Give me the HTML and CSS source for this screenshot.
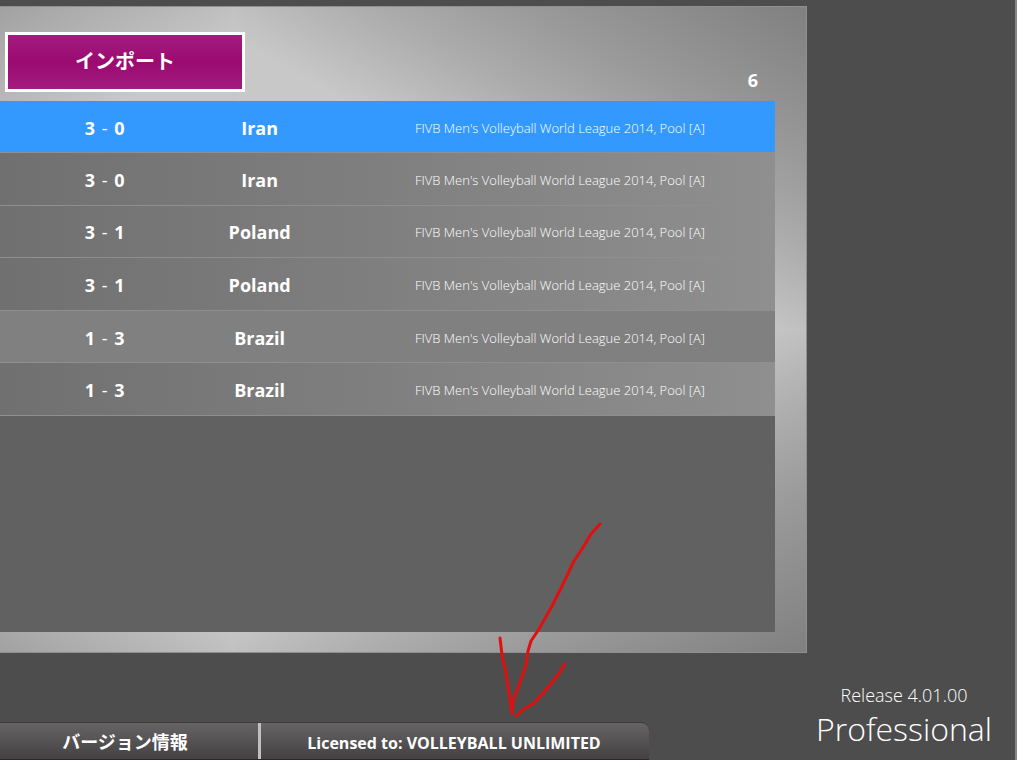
FILE: index.html
```html
<!DOCTYPE html>
<html lang="ja">
<head>
    <meta charset="UTF-8">
    <meta name="viewport" content="width=device-width, initial-scale=1.0">
    <title>インポート</title>
    <link rel="stylesheet" href="styles.css">
</head>
<body>
    <main class="panel">
        <header class="panel-header">
            <button type="button" class="import-button">インポート</button>
            <span class="match-count">6</span>
        </header>
        <div class="match-list">
            <table class="matches">
                <tbody>
                    <tr class="selected">
                        <td class="score">3 <span class="dash">-</span> 0</td>
                        <td class="team">Iran</td>
                        <td class="league">FIVB Men's Volleyball World League 2014, Pool [A]</td>
                    </tr>
                    <tr>
                        <td class="score">3 <span class="dash">-</span> 0</td>
                        <td class="team">Iran</td>
                        <td class="league">FIVB Men's Volleyball World League 2014, Pool [A]</td>
                    </tr>
                    <tr>
                        <td class="score">3 <span class="dash">-</span> 1</td>
                        <td class="team">Poland</td>
                        <td class="league">FIVB Men's Volleyball World League 2014, Pool [A]</td>
                    </tr>
                    <tr>
                        <td class="score">3 <span class="dash">-</span> 1</td>
                        <td class="team">Poland</td>
                        <td class="league">FIVB Men's Volleyball World League 2014, Pool [A]</td>
                    </tr>
                    <tr class="hovered">
                        <td class="score">1 <span class="dash">-</span> 3</td>
                        <td class="team">Brazil</td>
                        <td class="league">FIVB Men's Volleyball World League 2014, Pool [A]</td>
                    </tr>
                    <tr>
                        <td class="score">1 <span class="dash">-</span> 3</td>
                        <td class="team">Brazil</td>
                        <td class="league">FIVB Men's Volleyball World League 2014, Pool [A]</td>
                    </tr>
                </tbody>
            </table>
        </div>
    </main>

    <footer class="bottom">
        <div class="tab-bar">
            <button type="button" class="version-button">バージョン情報</button>
            <p class="license">Licensed to: VOLLEYBALL UNLIMITED</p>
        </div>
        <div class="release">
            <p class="release-number">Release 4.01.00</p>
            <p class="edition">Professional</p>
        </div>
    </footer>

    <!-- Hand-drawn arrow pointing at the licence name -->
    <svg class="arrow" width="120" height="210" viewBox="490 515 120 210" aria-hidden="true">
        <path d="M600 524 L591 534 L582 549 L574 561 L564 582 L552 606 L539 629 L531 641 L528 651 L526 665 L519 685 L513 701 L512 713"/>
        <path d="M500 638 L502 655 L506 673 L509 693 L512 713"/>
        <path d="M565 664 L558 675 L545 691 L533 704 L525 708 L516 716"/>
    </svg>
</body>
</html>
```

FILE: styles.css
```css
* {
    margin: 0;
    padding: 0;
    box-sizing: border-box;
}

body {
    position: relative;
    display: flex;
    flex-direction: column;
    min-height: 100vh;
    padding-top: 6px;
    background-color: #4d4d4d;
    border-right: 2px solid #858585;
    font-family: 'Open Sans', 'Noto Sans CJK JP', sans-serif;
    color: #fff;
}

button {
    border: none;
    color: #fff;
    font-family: 'Noto Sans CJK JP', sans-serif;
    font-weight: bold;
    cursor: pointer;
}

/* Main panel: four gradients meet in a light diamond, corners are dark */
.panel {
    flex: 1;
    display: flex;
    flex-direction: column;
    margin-right: 208px;
    padding: 0 31px 20px 0;
    border: 1px solid #909090;
    border-left: none;
    background-color: #c4c4c4;
    background-image:
        linear-gradient(to top right, #c8c8c8 45%, #c0c0c0 50%, #acacac 62%, #999999 76%, #808080 100%),
        linear-gradient(to bottom right, #c8c8c8 45%, #c0c0c0 50%, #acacac 62%, #999999 76%, #808080 100%),
        linear-gradient(to top left, #c8c8c8 45%, #c0c0c0 50%, #aaaaaa 65%, #989898 76%, #808080 100%),
        linear-gradient(to bottom left, #c8c8c8 45%, #c0c0c0 50%, #aaaaaa 65%, #989898 76%, #808080 100%);
    background-size: 71% 50%;
    background-position: 100% 0, 100% 100%, -145% 0, -145% 100%;
    background-repeat: no-repeat;
}

.panel-header {
    display: flex;
    justify-content: space-between;
    align-items: flex-end;
    padding: 25px 17px 9px 5px;
}

.import-button {
    width: 240px;
    height: 60px;
    padding-bottom: 4px;
    border: 3px solid #fff;
    background: linear-gradient(#a41c80, #9b0a70 50%, #a41c80);
    font-size: 20px;
}

.match-count {
    font-size: 18px;
    font-weight: bold;
    line-height: 24px;
}

.match-list {
    flex: 1;
    background-color: #616161;
}

.matches {
    width: 100%;
    height: 315px;
    border-collapse: collapse;
    table-layout: fixed;
    background: linear-gradient(to right, #707070, #8f8f8f);
}

.matches td {
    padding-top: 2px;
    border-bottom: 1px solid #8f8f8f;
    vertical-align: middle;
}

.matches .selected {
    background-color: #3399ff;
}

.matches .hovered {
    background-color: #808080;
}

.matches .score {
    width: 27%;
    text-align: center;
    font-size: 18px;
    font-weight: bold;
}

.score .dash {
    padding: 0 2px;
    font-weight: normal;
}

.matches .team {
    width: 13%;
    text-align: center;
    font-size: 18px;
    font-weight: bold;
    white-space: nowrap;
}

.matches .league {
    padding-left: 105px;
    font-size: 13px;
    font-weight: 300;
    white-space: nowrap;
}

/* Bottom area */
.bottom {
    display: flex;
    justify-content: space-between;
    align-items: flex-end;
    padding-top: 30px;
}

.tab-bar {
    display: flex;
    width: 649px;
    height: 38px;
    border-top: 1px solid #3c3c3c;
    border-bottom: 1px solid #2c2829;
    border-top-right-radius: 8px;
    background: linear-gradient(#666465, #434142);
}

.version-button {
    width: 261px;
    padding-right: 8px;
    border-right: 3px solid #c0c0c0;
    background: none;
    font-size: 18px;
}

.license {
    flex: 1;
    padding-right: 2px;
    text-align: center;
    font-size: 16px;
    font-weight: bold;
    line-height: 40px;
}

.release {
    padding: 0 23px 9px 0;
    text-align: center;
    font-weight: 300;
}

.release-number {
    font-size: 18px;
    line-height: 24px;
}

.edition {
    font-size: 32px;
    line-height: 44px;
}

.arrow {
    position: absolute;
    left: 490px;
    top: 515px;
    fill: none;
    stroke: #e01010;
    stroke-width: 3;
    stroke-linecap: round;
    stroke-linejoin: round;
    pointer-events: none;
}
```
